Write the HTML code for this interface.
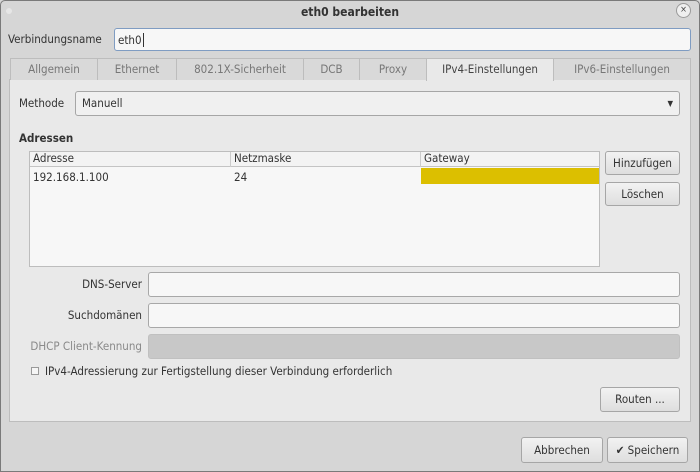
<!DOCTYPE html>
<html><head><meta charset="utf-8"><style>
*{box-sizing:border-box;margin:0;padding:0}
body{width:700px;height:472px;overflow:hidden;background:#d6d6d6;font-family:"DejaVu Sans Condensed","DejaVu Sans","Liberation Sans",sans-serif;font-stretch:condensed;font-size:11.5px;color:#333;position:relative}
.frame{position:absolute;left:0;top:0;width:700px;height:472px;border:1px solid #7a7a7a;border-radius:5px 5px 0 0;pointer-events:none}
.a{position:absolute}
.title{left:0;top:0;width:700px;height:24px;text-align:center;line-height:24px;font-weight:bold;color:#333;font-size:12px}
.entry{background:#f7f7f7;border:1px solid #a8a8a8;border-radius:3px}
.btn{background:linear-gradient(#f2f2f2,#dedede);border:1px solid #a6a6a6;border-radius:3px;text-align:center;color:#333}
.tab{top:58px;height:22px;line-height:21px;text-align:center;color:#777;background:#d9d9d9;border:1px solid #bdbdbd;border-bottom:none}
.lbl{text-align:right}
</style></head><body>
<div class="a title">eth0 bearbeiten</div>
<div class="a" style="left:6px;top:8px;width:6px;height:6px;border-radius:3px;background:#e6e6e6"></div>
<div class="a" style="left:676px;top:3px;width:15px;height:15px;border-radius:8px;border:1px solid #9a9a9a;background:#efefef;font-size:9px;line-height:13px;text-align:center;color:#444">×</div>
<div class="a" style="left:8px;top:32px">Verbindungsname</div>
<div class="a entry" style="left:114px;top:28px;width:577px;height:23px;border-color:#7f9cc2;padding:4px 3px">eth0<span style="border-left:1px solid #333;margin-left:1px"></span></div>
<div class="a" style="left:9px;top:79px;width:682px;height:343px;background:#e9e9e9;border:1px solid #bdbdbd"></div>
<div class="a tab" style="left:10px;width:88px">Allgemein</div>
<div class="a tab" style="left:97px;width:80px">Ethernet</div>
<div class="a tab" style="left:176px;width:128px">802.1X-Sicherheit</div>
<div class="a tab" style="left:303px;width:57px">DCB</div>
<div class="a tab" style="left:359px;width:68px">Proxy</div>
<div class="a tab" style="left:426px;width:128px;background:#e9e9e9;color:#444;height:23px">IPv4-Einstellungen</div>
<div class="a tab" style="left:553px;width:138px">IPv6-Einstellungen</div>
<div class="a" style="left:19px;top:96px">Methode</div>
<div class="a btn" style="left:75px;top:91px;width:605px;height:25px;text-align:left;padding:4px 6px;background:#f0f0f0">Manuell<span style="position:absolute;right:6px;top:7px;font-size:8px">▼</span></div>
<div class="a" style="left:19px;top:131px;font-weight:bold">Adressen</div>
<div class="a" style="left:29px;top:151px;width:571px;height:116px;background:#f7f7f7;border:1px solid #bdbdbd"></div>
<div class="a" style="left:30px;top:152px;width:569px;height:15px;border-bottom:1px solid #c4c4c4;background:#f3f3f3"></div>
<div class="a" style="left:230px;top:152px;height:15px;border-left:1px solid #ccc"></div>
<div class="a" style="left:420px;top:152px;height:15px;border-left:1px solid #ccc"></div>
<div class="a" style="left:33px;top:151px">Adresse</div>
<div class="a" style="left:234px;top:151px">Netzmaske</div>
<div class="a" style="left:424px;top:151px">Gateway</div>
<div class="a" style="left:33px;top:170px">192.168.1.100</div>
<div class="a" style="left:234px;top:170px">24</div>
<div class="a" style="left:421px;top:168px;width:178px;height:16px;background:#dcbf00"></div>
<div class="a btn" style="left:605px;top:151px;width:75px;height:24px;line-height:22px">Hinzufügen</div>
<div class="a btn" style="left:605px;top:182px;width:75px;height:24px;line-height:22px">Löschen</div>
<div class="a lbl" style="left:30px;top:277px;width:112px">DNS-Server</div>
<div class="a entry" style="left:148px;top:272px;width:532px;height:25px"></div>
<div class="a lbl" style="left:30px;top:308px;width:112px">Suchdomänen</div>
<div class="a entry" style="left:148px;top:303px;width:532px;height:25px"></div>
<div class="a lbl" style="left:20px;top:339px;width:122px;color:#8a8a8a">DHCP Client-Kennung</div>
<div class="a" style="left:148px;top:334px;width:532px;height:25px;background:#c8c8c8;border:1px solid #c0c0c0;border-radius:3px"></div>
<div class="a" style="left:31px;top:367px;width:8px;height:8px;border:1px solid #999;background:#f5f5f5"></div>
<div class="a" style="left:45px;top:364px">IPv4-Adressierung zur Fertigstellung dieser Verbindung erforderlich</div>
<div class="a btn" style="left:600px;top:387px;width:80px;height:25px;line-height:23px">Routen ...</div>
<div class="a btn" style="left:521px;top:437px;width:82px;height:26px;line-height:24px">Abbrechen</div>
<div class="a btn" style="left:607px;top:437px;width:81px;height:26px;line-height:24px">✔ Speichern</div>
<div class="frame"></div>
</body></html>
